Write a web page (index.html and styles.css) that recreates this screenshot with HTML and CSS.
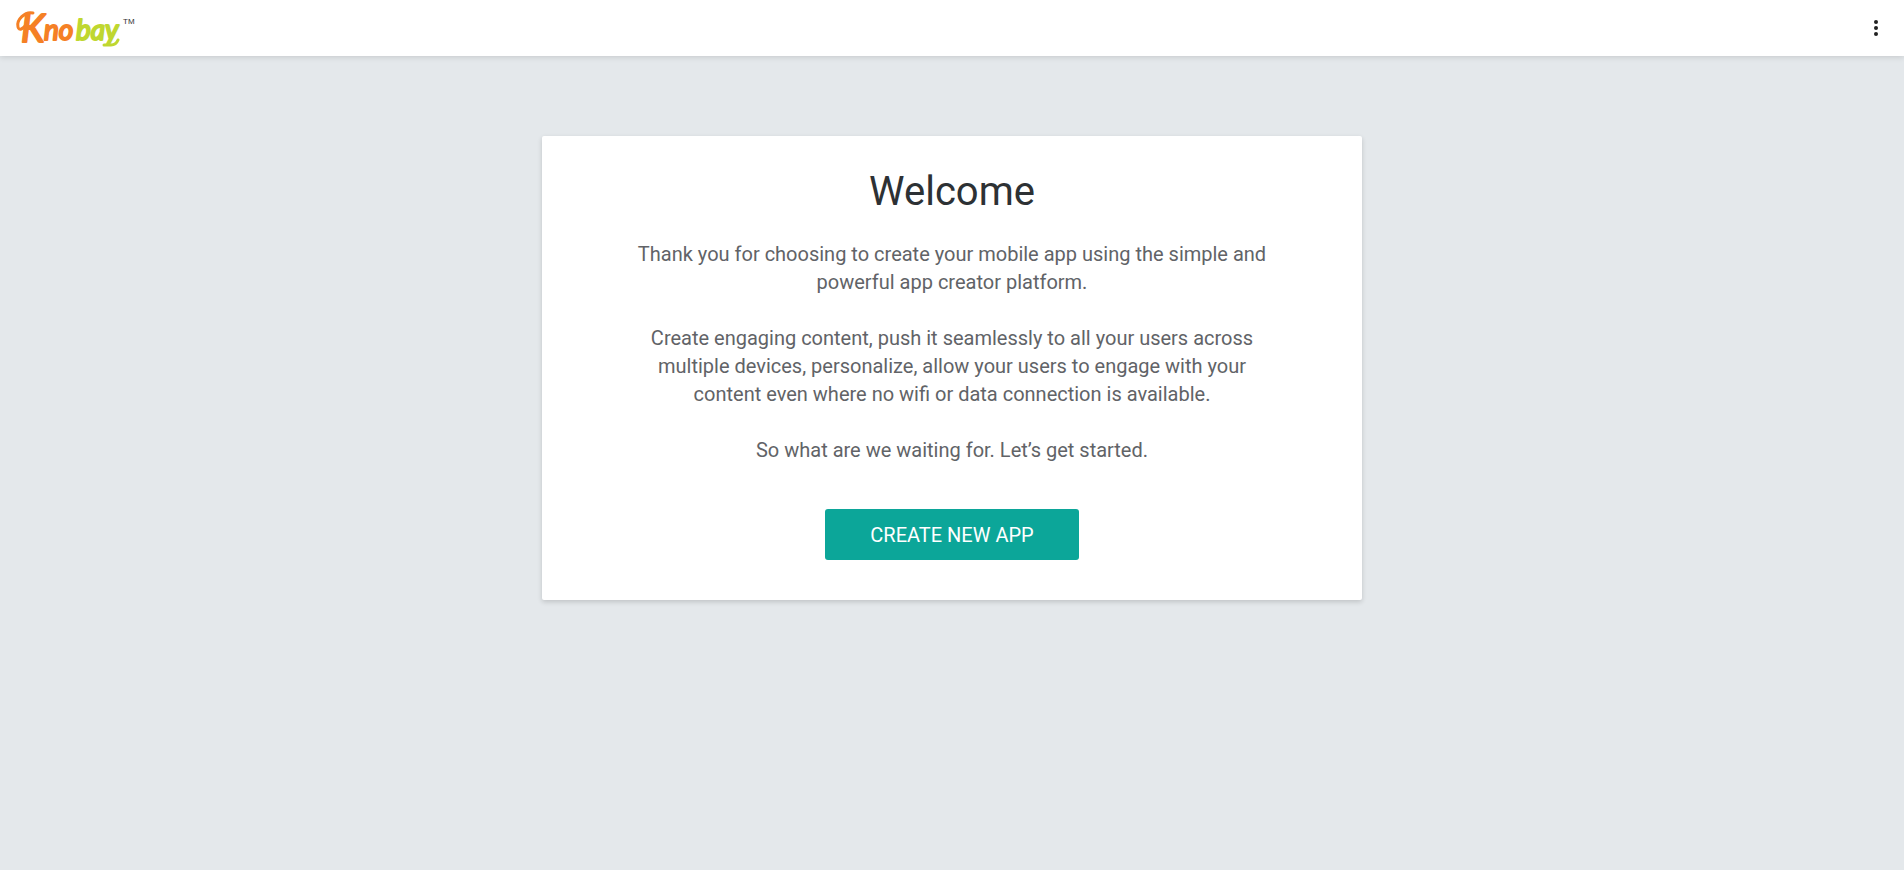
FILE: index.html
```html
<!DOCTYPE html>
<html lang="en">
<head>
<meta charset="utf-8">
<meta name="viewport" content="width=device-width, initial-scale=1">
<title>Knobay</title>
<link rel="stylesheet" href="styles.css">
</head>
<body>
<header class="topbar">
  <a class="brand" href="#" aria-label="Knobay home">
    <svg class="logo" viewBox="0 0 122 56" width="122" height="56">
      <path class="swash" d="M18 13C10 11 1 20 3 27C4 31 8 29 11 25"/>
      <text class="word orange cap" x="6" y="42">K</text>
      <text class="word orange" x="29" y="40">no</text>
      <text class="word green" x="61" y="40">bay</text>
      <path class="tail" d="M89 45H96Q101 45 103 40"/>
      <text class="mark" x="108" y="24">TM</text>
    </svg>
  </a>
  <button class="menu" type="button" aria-label="More options">
    <svg viewBox="0 0 24 24" width="24" height="24">
      <circle cx="12" cy="6" r="2"/>
      <circle cx="12" cy="12" r="2"/>
      <circle cx="12" cy="18" r="2"/>
    </svg>
  </button>
</header>
<main class="content">
  <section class="card">
    <h1>Welcome</h1>
    <div class="copy">
      <p>Thank you for choosing to create your mobile app using the simple and powerful app creator platform.</p>
      <p>Create engaging content, push it seamlessly to all your users across multiple devices, personalize, allow your users to engage with your content even where no wifi or data connection is available.</p>
      <p>So what are we waiting for. Let’s get started.</p>
    </div>
    <button class="primary" type="button">CREATE NEW APP</button>
  </section>
</main>
</body>
</html>
```
FILE: styles.css
```css
* { box-sizing: border-box; }
body {
  margin: 0;
  min-height: 100vh;
  background: #e4e8eb;
  color: #616367;
  font: 20px/28px Roboto, sans-serif;
}
.topbar {
  display: flex;
  align-items: center;
  justify-content: space-between;
  height: 56px;
  padding: 0 16px 0 15px;
  background: #fff;
  box-shadow: 0 1px 6px rgba(0, 0, 0, .14);
}
.brand, .logo, .menu svg { display: block; }
.logo { overflow: visible; }
.word {
  font: italic 400 28px Lato, sans-serif;
  stroke-width: 2;
  stroke-linejoin: round;
}
.cap { font-size: 38px; }
.orange { fill: #f58025; stroke: #f58025; }
.green { fill: #bfd730; stroke: #bfd730; }
.swash, .tail { fill: none; stroke-width: 3; stroke-linecap: round; }
.swash { stroke: #f58025; }
.tail { stroke: #bfd730; }
.mark { font: 8px "Liberation Sans", sans-serif; fill: #333; }
.menu {
  padding: 0;
  border: 0;
  background: none;
  fill: #212121;
  cursor: pointer;
}
.content { padding: 80px 16px; }
.card {
  display: flex;
  flex-direction: column;
  align-items: center;
  max-width: 820px;
  margin: 0 auto;
  padding: 32px 90px 40px;
  background: #fff;
  border-radius: 2px;
  box-shadow: 0 2px 5px rgba(0, 0, 0, .16);
  text-align: center;
}
h1 {
  margin: 0 0 24px;
  color: #2d3134;
  font-size: 40px;
  font-weight: 400;
  line-height: 48px;
}
.copy {
  display: grid;
  gap: 28px;
}
p { margin: 0; }
.primary {
  margin-top: 45px;
  padding: 12px 45px 11px;
  border: 0;
  border-radius: 3px;
  background: #0ca699;
  color: #fff;
  font: inherit;
  line-height: 28px;
  cursor: pointer;
}
```
